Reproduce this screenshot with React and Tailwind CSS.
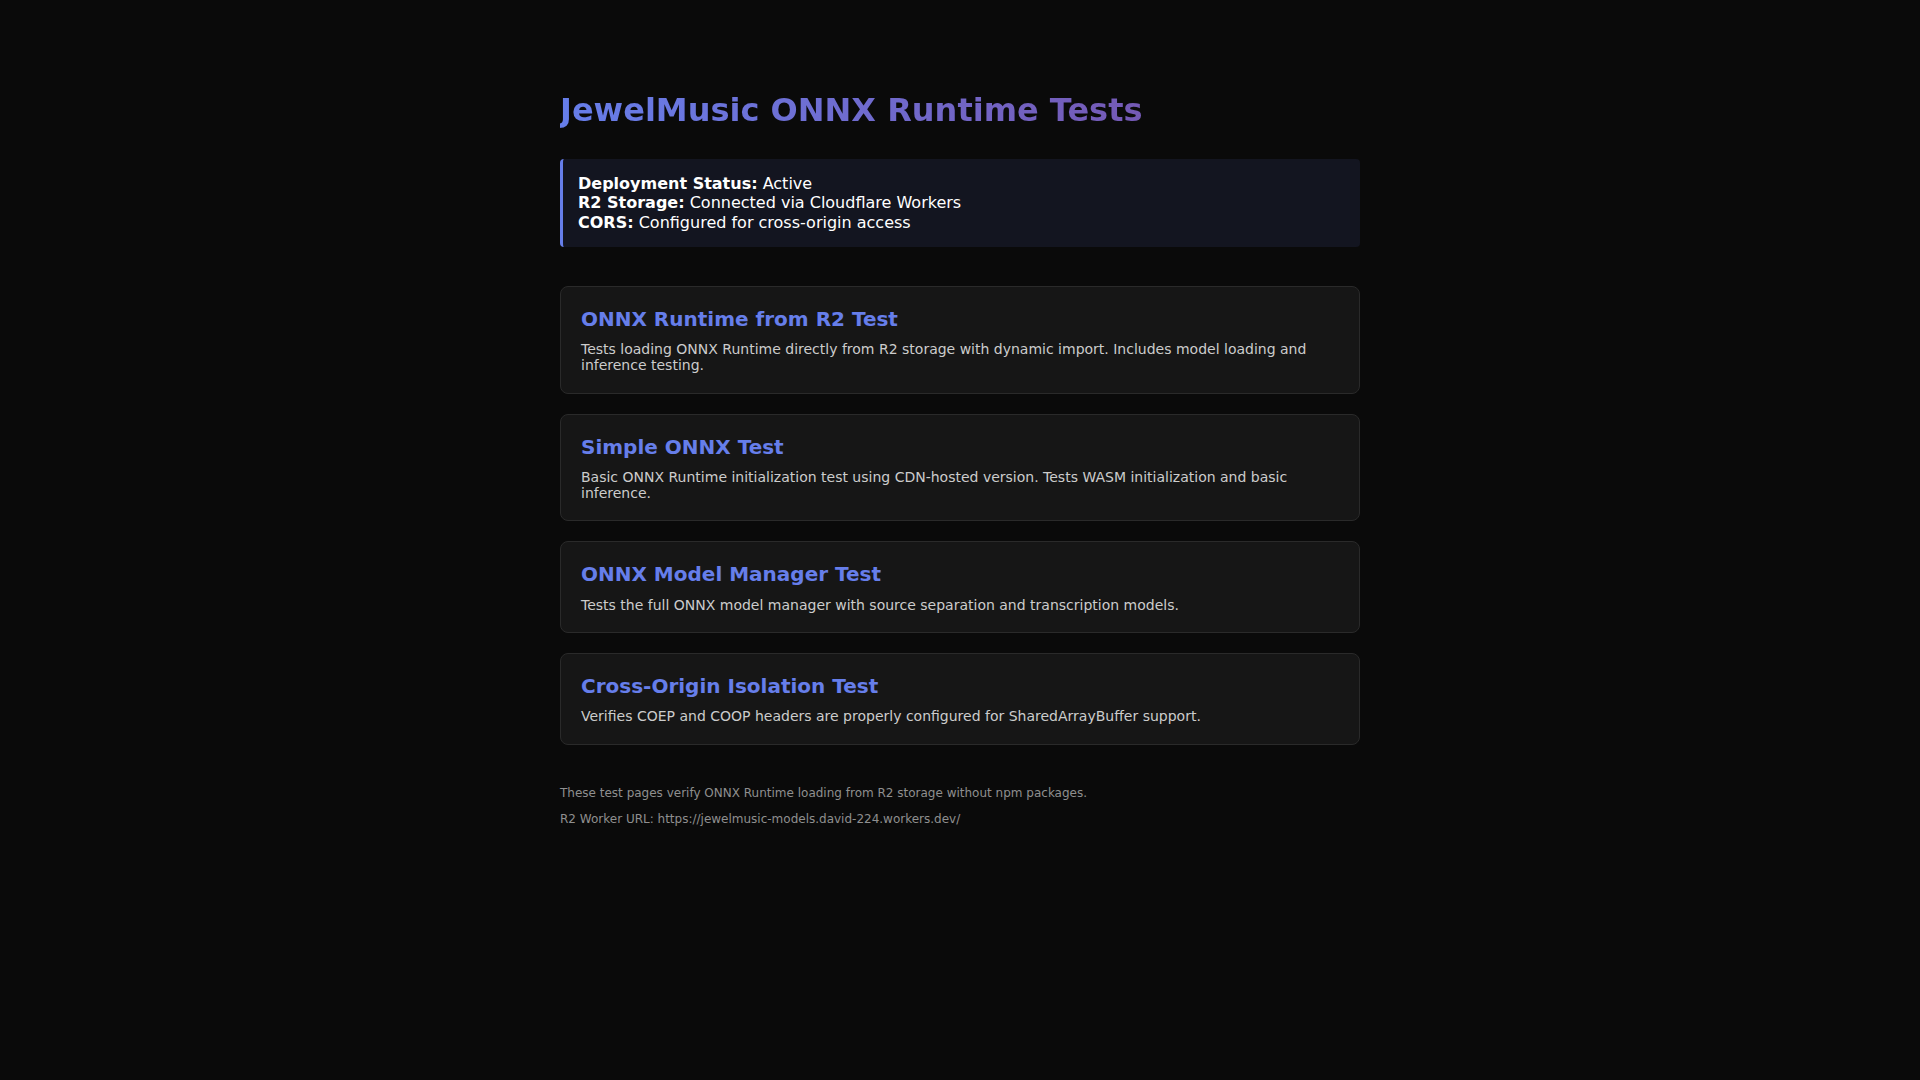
export default function App() {
  const tests = [
    {
      title: "ONNX Runtime from R2 Test",
      desc: "Tests loading ONNX Runtime directly from R2 storage with dynamic import. Includes model loading and inference testing.",
    },
    {
      title: "Simple ONNX Test",
      desc: "Basic ONNX Runtime initialization test using CDN-hosted version. Tests WASM initialization and basic inference.",
    },
    {
      title: "ONNX Model Manager Test",
      desc: "Tests the full ONNX model manager with source separation and transcription models.",
    },
    {
      title: "Cross-Origin Isolation Test",
      desc: "Verifies COEP and COOP headers are properly configured for SharedArrayBuffer support.",
    },
  ];
  return (
    <div
      className="min-h-screen bg-[#0a0a0a] text-[#e0e0e0]"
      style={{ fontFamily: '"DejaVu Sans", Verdana, sans-serif' }}
    >
      <div className="mx-auto w-[800px] pt-[92px] pb-10">
        <h1 className="m-0 text-[32px] font-bold leading-[1.164] bg-gradient-to-r from-[#667eea] to-[#764ba2] bg-clip-text text-transparent">
          JewelMusic ONNX Runtime Tests
        </h1>
        <div className="mt-[30px] rounded-[4px] border-l-[3px] border-[#667eea] bg-[#131520] py-[15px] pl-[15px] pr-4 text-[16px] leading-[1.2] text-white">
          <div>
            <strong>Deployment Status:</strong> Active
          </div>
          <div>
            <strong>R2 Storage:</strong> Connected via Cloudflare Workers
          </div>
          <div>
            <strong>CORS:</strong> Configured for cross-origin access
          </div>
        </div>
        <div className="mt-[39px] flex flex-col gap-5">
          {tests.map((t) => (
            <div
              key={t.title}
              className="rounded-lg border border-[#2a2a2a] bg-[#161616] px-5 pt-[21px] pb-[19px]"
            >
              <h3 className="m-0 mb-[10px] text-[20px] font-bold leading-[1.164] text-[#667eea]">
                {t.title}
              </h3>
              <p className="m-0 text-[14px] leading-[1.164] text-[#cccccc]">
                {t.desc}
              </p>
            </div>
          ))}
        </div>
        <div className="mt-[42px] flex flex-col gap-3 text-[12px] leading-[1.164] text-[#8f8f8f]">
          <p className="m-0">
            These test pages verify ONNX Runtime loading from R2 storage without npm packages.
          </p>
          <p className="m-0">
            R2 Worker URL: https://jewelmusic-models.david-224.workers.dev/
          </p>
        </div>
      </div>
    </div>
  );
}
